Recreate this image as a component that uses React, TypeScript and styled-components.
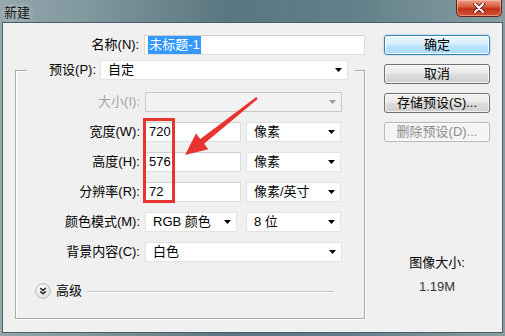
import styled, { createGlobalStyle } from 'styled-components';

const GlobalStyle = createGlobalStyle`
    html, body {
        margin: 0;
        padding: 0;
    }

    body {
        width: 505px;
        height: 336px;
        overflow: hidden;
        font-family: "Liberation Sans", "Noto Sans CJK SC", sans-serif;
        font-size: 13px;
        color: #000;
    }
`

const Window = styled.div`
    position: relative;
    width: 505px;
    height: 336px;
    box-sizing: border-box;
    display: flex;
    flex-direction: column;
    padding: 0 2px 3px 2px;
    background: linear-gradient(90deg, #94a7ac 0%, #7f979e 18%, #5a7680 45%, #62808a 70%, #879da3 100%);
`

const TitleBar = styled.div`
    height: 22px;
    display: flex;
    align-items: flex-start;
    flex-shrink: 0;
`

const Title = styled.span`
    margin: 3px 0 0 2px;
    font-family: "Noto Sans CJK SC", sans-serif;
    font-size: 13px;
    line-height: 18px;
    color: #111;
    text-shadow: 0 0 6px rgba(255, 255, 255, 0.7);
`

const CloseButton = styled.div`
    margin-left: auto;
    margin-right: 1px;
    width: 46px;
    height: 17px;
    box-sizing: border-box;
    display: flex;
    align-items: center;
    justify-content: center;
    border: 1px solid #5e2217;
    border-top: none;
    border-radius: 0 0 5px 5px;
    background: linear-gradient(#e8a08a 0%, #d8603f 40%, #c2311a 55%, #d25537 100%);
    box-shadow: inset 0 0 0 1px rgba(255, 210, 190, 0.5);
`

const Body = styled.div`
    flex: 1;
    display: flex;
    box-sizing: border-box;
    border: 1px solid #4d5d65;
    background: #f0f0f0;
`

const LeftPane = styled.div`
    width: 362px;
    display: flex;
    flex-direction: column;
`

const NameRow = styled.div`
    margin-top: 12px;
    height: 20px;
    display: flex;
    align-items: center;
    gap: 5px;
`

const Label = styled.span<{ $width?: number; $disabled?: boolean }>`
    width: ${({ $width }) => ($width ? `${$width}px` : 'auto')};
    text-align: right;
    white-space: nowrap;
    line-height: 18px;
    color: ${({ $disabled }) => ($disabled ? '#a3a3a3' : '#000')};
`

const Field = styled.div<{ $width: number }>`
    width: ${({ $width }) => $width}px;
    height: 20px;
    box-sizing: border-box;
    display: flex;
    align-items: center;
    padding: 0 4px 0 3px;
    background: #fff;
    border: 1px solid #dedede;
    border-top-color: #cfcfcf;
    line-height: 18px;
    white-space: nowrap;
`

const Selected = styled.span`
    background: #3399ff;
    color: #fff;
    padding: 0 1px;
`

const Select = styled.div<{ $width: number; $disabled?: boolean }>`
    width: ${({ $width }) => $width}px;
    height: 20px;
    box-sizing: border-box;
    display: flex;
    align-items: center;
    justify-content: space-between;
    padding: 0 5px 0 7px;
    background: ${({ $disabled }) => ($disabled ? '#f2f2f2' : '#fff')};
    border: 1px solid ${({ $disabled }) => ($disabled ? '#c8c8c8' : '#e2e2e2')};
    color: ${({ $disabled }) => ($disabled ? '#a3a3a3' : '#000')};
    line-height: 18px;
    white-space: nowrap;
`

const GroupBox = styled.fieldset`
    width: 350px;
    box-sizing: border-box;
    margin: 5px 0 0 12px;
    padding: 12px 0 19px 0;
    border: 1px solid #a9a9ae;
    box-shadow: inset 1px 1px 0 #fff, 1px 1px 0 #fff;
    min-width: 0;
`

const Legend = styled.legend`
    margin-left: 11px;
    padding: 0;
    width: 328px;
    height: 20px;
    display: flex;
    align-items: center;
    gap: 4px;
    background: #f0f0f0;
`

const FormGrid = styled.div`
    display: grid;
    grid-template-columns: 124px auto;
    column-gap: 5px;
    row-gap: 10px;
    align-items: center;
`

const Controls = styled.div<{ $gap?: number }>`
    display: flex;
    gap: ${({ $gap }) => $gap ?? 5}px;
`

const AdvancedRow = styled.div`
    margin-top: 21px;
    height: 16px;
    display: flex;
    align-items: center;
    padding-left: 19px;
`

const AdvancedText = styled.span`
    margin-left: 5px;
    line-height: 16px;
`

const Rule = styled.div`
    flex: 1;
    height: 1px;
    margin: 0 30px 0 5px;
    background: #c8c8c8;
    box-shadow: 0 1px 0 #fff;
`

const RightPane = styled.div`
    margin-left: 19px;
    width: 106px;
    padding-top: 12px;
    display: flex;
    flex-direction: column;
`

const ButtonStack = styled.div`
    display: flex;
    flex-direction: column;
    gap: 9px;
`

const Button = styled.div<{ $primary?: boolean; $disabled?: boolean }>`
    height: 20px;
    box-sizing: border-box;
    display: flex;
    align-items: center;
    justify-content: center;
    border-radius: 3px;
    line-height: 18px;
    border: 1px solid ${({ $primary, $disabled }) => ($primary ? '#3c7fb1' : $disabled ? '#b4b8bb' : '#707070')};
    color: ${({ $disabled }) => ($disabled ? '#8d8d8d' : '#000')};
    background: ${({ $primary, $disabled }) =>
        $primary
            ? 'linear-gradient(#eaf6fd 0%, #d9f0fc 45%, #bee6fd 50%, #a7d9f5 100%)'
            : $disabled
                ? '#f4f4f4'
                : 'linear-gradient(#f2f2f2 0%, #ebebeb 45%, #dddddd 50%, #cfcfcf 100%)'};
    box-shadow: ${({ $primary }) =>
        $primary ? 'inset 0 0 0 1px #fff, 0 0 2px #6ec6f5' : 'inset 0 0 0 1px rgba(255,255,255,0.7)'};
`

const ImageSize = styled.div`
    margin-top: 113px;
    display: flex;
    flex-direction: column;
    align-items: center;
    gap: 8px;
    line-height: 16px;
`

const SizeValue = styled.span`
    color: #333;
`

const Overlay = styled.svg`
    position: absolute;
    left: 0;
    top: 0;
    pointer-events: none;
`

const Arrow = ({ disabled }: { disabled?: boolean }) => (
    <svg width="7" height="4" viewBox="0 0 7 4">
        <polygon points="0,0 7,0 3.5,4" fill={disabled ? '#9a9a9a' : '#000'} />
    </svg>
);

const ChevronCircle = () => (
    <svg width="16" height="16" viewBox="0 0 16 16">
        <defs>
            <radialGradient id="cc" cx="40%" cy="35%" r="70%">
                <stop offset="0%" stopColor="#ffffff" />
                <stop offset="100%" stopColor="#dcdcdc" />
            </radialGradient>
        </defs>
        <circle cx="8" cy="8" r="7.4" fill="url(#cc)" stroke="#bdbdbd" />
        <path d="M5.2 5 L8 7.4 L10.8 5 M5.2 8.4 L8 10.8 L10.8 8.4" fill="none" stroke="#222" strokeWidth="1.5" />
    </svg>
);

const App = () => {
    return (
        <>
            <GlobalStyle />
            <Window>
                <TitleBar>
                    <Title>新建</Title>
                    <CloseButton>
                        <svg width="12" height="10" viewBox="0 0 12 10">
                            <path d="M2 1 L10 9 M10 1 L2 9" stroke="#5a1a10" strokeWidth="3.6" strokeLinecap="round" />
                            <path d="M2 1 L10 9 M10 1 L2 9" stroke="#fff" strokeWidth="2" strokeLinecap="round" />
                        </svg>
                    </CloseButton>
                </TitleBar>
                <Body>
                    <LeftPane>
                        <NameRow>
                            <Label $width={137}>名称(N):</Label>
                            <Field $width={222}>
                                <Selected>未标题-1</Selected>
                            </Field>
                        </NameRow>
                        <GroupBox>
                            <Legend>
                                <Label $width={69}>预设(P):</Label>
                                <Select $width={248}>
                                    自定
                                    <Arrow />
                                </Select>
                            </Legend>
                            <FormGrid>
                                <Label $disabled>大小(I):</Label>
                                <Select $width={197} $disabled>
                                    <span />
                                    <Arrow disabled />
                                </Select>

                                <Label>宽度(W):</Label>
                                <Controls>
                                    <Field $width={96}>720</Field>
                                    <Select $width={95}>像素<Arrow /></Select>
                                </Controls>

                                <Label>高度(H):</Label>
                                <Controls>
                                    <Field $width={96}>576</Field>
                                    <Select $width={95}>像素<Arrow /></Select>
                                </Controls>

                                <Label>分辨率(R):</Label>
                                <Controls>
                                    <Field $width={96}>72</Field>
                                    <Select $width={95}>像素/英寸<Arrow /></Select>
                                </Controls>

                                <Label>颜色模式(M):</Label>
                                <Controls $gap={9}>
                                    <Select $width={92}>RGB 颜色<Arrow /></Select>
                                    <Select $width={95}>8 位<Arrow /></Select>
                                </Controls>

                                <Label>背景内容(C):</Label>
                                <Select $width={197}>白色<Arrow /></Select>
                            </FormGrid>
                            <AdvancedRow>
                                <ChevronCircle />
                                <AdvancedText>高级</AdvancedText>
                                <Rule />
                            </AdvancedRow>
                        </GroupBox>
                    </LeftPane>
                    <RightPane>
                        <ButtonStack>
                            <Button $primary>确定</Button>
                            <Button>取消</Button>
                            <Button>存储预设(S)...</Button>
                            <Button $disabled>删除预设(D)...</Button>
                        </ButtonStack>
                        <ImageSize>
                            <span>图像大小:</span>
                            <SizeValue>1.19M</SizeValue>
                        </ImageSize>
                    </RightPane>
                </Body>
                {/* red annotation drawn over the dialog */}
                <Overlay width="505" height="336" viewBox="0 0 505 336">
                    <rect x="144.5" y="119.5" width="29" height="82" fill="none" stroke="#e8342f" strokeWidth="3" />
                    <polygon
                        points="256.3,97.1 200.3,139.1 196,133.6 185,155 208.4,149.2 204.1,143.8 257.7,98.9"
                        fill="#e8342f"
                    />
                </Overlay>
            </Window>
        </>
    );
};

export default App;
